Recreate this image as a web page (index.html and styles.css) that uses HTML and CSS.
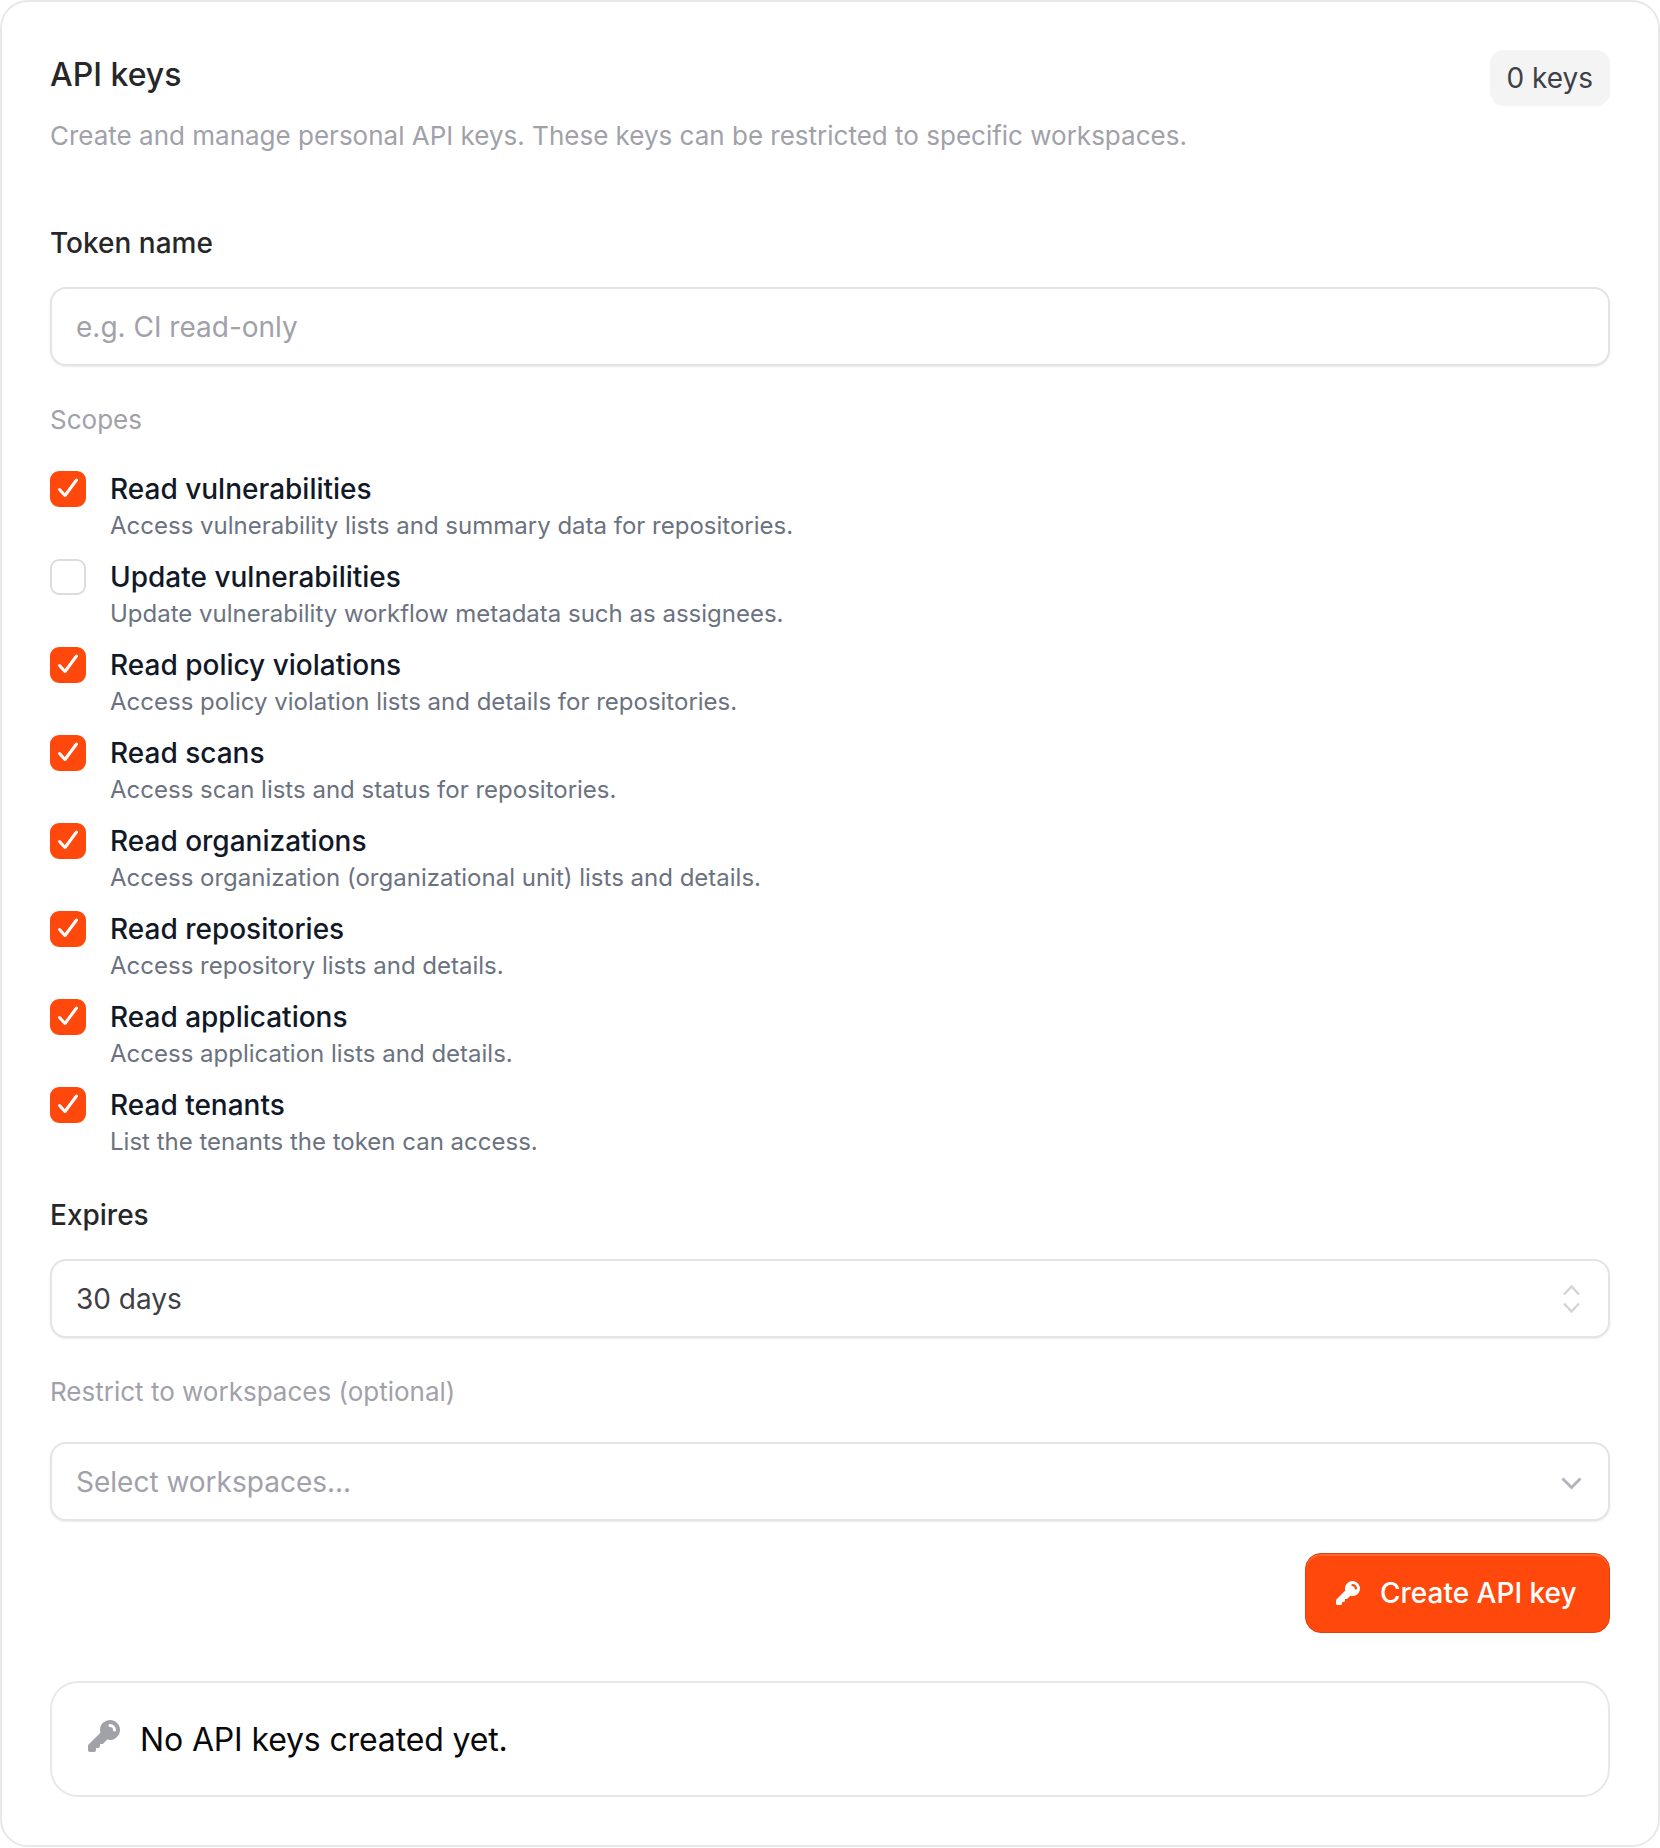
FILE: index.html
```html
<!DOCTYPE html>
<html lang="en">
<head>
    <meta charset="UTF-8">
    <title>API keys</title>
    <link rel="stylesheet" href="styles.css">
</head>
<body>
    <section class="card">
        <div class="card-head">
            <div>
                <h2 class="card-title">API keys</h2>
                <p class="card-sub">Create and manage personal API keys. These keys can be restricted to specific workspaces.</p>
            </div>
            <span class="badge">0 keys</span>
        </div>

        <form class="key-form">
            <label class="field-label" for="token_name">Token name</label>
            <input class="text-input" type="text" id="token_name" placeholder="e.g. CI read-only">

            <div class="muted-label scopes-label">Scopes</div>
            <div class="scopes">
                <div class="scope">
                    <span class="check on"><svg viewBox="0 0 32 32"><path d="M7.5 16.5l5.5 6L24.5 7"/></svg></span>
                    <div>
                        <div class="scope-name">Read vulnerabilities</div>
                        <div class="scope-desc">Access vulnerability lists and summary data for repositories.</div>
                    </div>
                </div>
                <div class="scope">
                    <span class="check"></span>
                    <div>
                        <div class="scope-name">Update vulnerabilities</div>
                        <div class="scope-desc">Update vulnerability workflow metadata such as assignees.</div>
                    </div>
                </div>
                <div class="scope">
                    <span class="check on"><svg viewBox="0 0 32 32"><path d="M7.5 16.5l5.5 6L24.5 7"/></svg></span>
                    <div>
                        <div class="scope-name">Read policy violations</div>
                        <div class="scope-desc">Access policy violation lists and details for repositories.</div>
                    </div>
                </div>
                <div class="scope">
                    <span class="check on"><svg viewBox="0 0 32 32"><path d="M7.5 16.5l5.5 6L24.5 7"/></svg></span>
                    <div>
                        <div class="scope-name">Read scans</div>
                        <div class="scope-desc">Access scan lists and status for repositories.</div>
                    </div>
                </div>
                <div class="scope">
                    <span class="check on"><svg viewBox="0 0 32 32"><path d="M7.5 16.5l5.5 6L24.5 7"/></svg></span>
                    <div>
                        <div class="scope-name">Read organizations</div>
                        <div class="scope-desc">Access organization (organizational unit) lists and details.</div>
                    </div>
                </div>
                <div class="scope">
                    <span class="check on"><svg viewBox="0 0 32 32"><path d="M7.5 16.5l5.5 6L24.5 7"/></svg></span>
                    <div>
                        <div class="scope-name">Read repositories</div>
                        <div class="scope-desc">Access repository lists and details.</div>
                    </div>
                </div>
                <div class="scope">
                    <span class="check on"><svg viewBox="0 0 32 32"><path d="M7.5 16.5l5.5 6L24.5 7"/></svg></span>
                    <div>
                        <div class="scope-name">Read applications</div>
                        <div class="scope-desc">Access application lists and details.</div>
                    </div>
                </div>
                <div class="scope">
                    <span class="check on"><svg viewBox="0 0 32 32"><path d="M7.5 16.5l5.5 6L24.5 7"/></svg></span>
                    <div>
                        <div class="scope-name">Read tenants</div>
                        <div class="scope-desc">List the tenants the token can access.</div>
                    </div>
                </div>
            </div>

            <div class="field-label expires-label">Expires</div>
            <div class="select-box">
                <span>30 days</span>
                <svg class="updown" viewBox="0 0 17 28"><path d="M1 9.5l7.5-8 7.5 8M1 18.5l7.5 8 7.5-8"/></svg>
            </div>

            <div class="muted-label restrict-label">Restrict to workspaces (optional)</div>
            <div class="select-box placeholder">
                <span>Select workspaces...</span>
                <svg class="chevron" viewBox="0 0 21 13"><path d="M1.5 1.5l9 9 9-9"/></svg>
            </div>

            <div class="form-actions">
                <button type="button" class="btn-primary">
                    <svg class="key-icon" viewBox="0 0 20 20"><path fill-rule="evenodd" clip-rule="evenodd" d="M8 7a5 5 0 1 1 3.61 4.804l-1.903 1.903A1 1 0 0 1 9 14H8v1a1 1 0 0 1-1 1H6v1a1 1 0 0 1-1 1H3a1 1 0 0 1-1-1v-2a1 1 0 0 1 .293-.707L8.196 8.39A5.002 5.002 0 0 1 8 7Zm5-3a.75.75 0 0 0 0 1.5A1.5 1.5 0 0 1 14.5 7 .75.75 0 0 0 16 7a3 3 0 0 0-3-3Z"/></svg>
                    Create API key
                </button>
            </div>
        </form>

        <div class="empty-box">
            <svg class="empty-icon" viewBox="0 0 20 20"><path fill-rule="evenodd" clip-rule="evenodd" d="M8 7a5 5 0 1 1 3.61 4.804l-1.903 1.903A1 1 0 0 1 9 14H8v1a1 1 0 0 1-1 1H6v1a1 1 0 0 1-1 1H3a1 1 0 0 1-1-1v-2a1 1 0 0 1 .293-.707L8.196 8.39A5.002 5.002 0 0 1 8 7Zm5-3a.75.75 0 0 0 0 1.5A1.5 1.5 0 0 1 14.5 7 .75.75 0 0 0 16 7a3 3 0 0 0-3-3Z"/></svg>
            <span>No API keys created yet.</span>
        </div>
    </section>
</body>
</html>
```

FILE: styles.css
```css
* {
    box-sizing: border-box;
}
body {
    margin: 0;
    background: #fff;
    font-family: Inter, "Liberation Sans", sans-serif;
    color: #111827;
}
.card {
    height: 1847px;
    padding: 48px 48px 0;
    border: 2px solid #e8e8ea;
    border-radius: 28px;
    background: #fff;
}
.card-head {
    display: flex;
    justify-content: space-between;
    align-items: flex-start;
}
.card-title {
    margin: 9px 0 0;
    font-size: 32px;
    font-weight: 500;
    line-height: 32px;
    color: #27272a;
}
.card-sub {
    margin: 27px 0 0;
    font-size: 26px;
    line-height: 36px;
    color: #a1a1aa;
}
.badge {
    padding: 10px 17px 10px 16px;
    border-radius: 14px;
    background: #f4f4f5;
    font-size: 28px;
    line-height: 36px;
    color: #3f3f46;
}
.key-form {
    display: flex;
    flex-direction: column;
}
.field-label {
    margin-top: 72px;
    font-size: 28px;
    font-weight: 500;
    line-height: 34px;
    color: #27272a;
}
.text-input,
.select-box {
    width: 100%;
    height: 79px;
    margin-top: 27px;
    padding: 0 25px 0 24px;
    border: 2px solid #e4e4e7;
    border-radius: 16px;
    background: #fff;
    font-family: inherit;
    font-size: 28px;
    color: #3f3f46;
    box-shadow: 0 1px 2px rgba(0, 0, 0, 0.08);
}
.text-input::placeholder {
    color: #a1a1aa;
}
.select-box {
    display: flex;
    align-items: center;
    justify-content: space-between;
}
.select-box.placeholder {
    color: #a1a1aa;
}
.muted-label {
    font-size: 26px;
    line-height: 34px;
    color: #a1a1aa;
}
.scopes-label {
    margin-top: 37px;
}
.scopes {
    display: flex;
    flex-direction: column;
    margin-top: 34px;
}
.scope {
    display: flex;
    gap: 24px;
    height: 88px;
}
.check {
    flex: none;
    display: flex;
    align-items: center;
    justify-content: center;
    width: 36px;
    height: 36px;
    border: 2px solid #dcdcdf;
    border-radius: 9px;
    background: #fff;
}
.check.on {
    border-color: #ff480c;
    background: #ff480c;
}
.check svg {
    width: 32px;
    height: 32px;
    fill: none;
    stroke: #fff;
    stroke-width: 3;
    stroke-linecap: round;
    stroke-linejoin: round;
}
.scope-name {
    font-size: 28px;
    font-weight: 500;
    line-height: 36px;
    color: #111827;
}
.scope-desc {
    margin-top: 1px;
    font-size: 24px;
    line-height: 36px;
    color: #6b7280;
}
.expires-label {
    margin-top: 23px;
}
.restrict-label {
    margin-top: 37px;
}
.restrict-label + .select-box {
    margin-top: 33px;
}
.updown {
    width: 17px;
    height: 28px;
    margin-right: 3px;
    fill: none;
    stroke: #d4d4d8;
    stroke-width: 2.4;
}
.chevron {
    width: 21px;
    height: 13px;
    margin: 3px 1px 0 0;
    fill: none;
    stroke: #b4b4bd;
    stroke-width: 3;
}
.form-actions {
    display: flex;
    justify-content: flex-end;
    margin-top: 32px;
}
.btn-primary {
    display: flex;
    align-items: center;
    gap: 17px;
    width: 305px;
    height: 80px;
    padding: 0 27px;
    border: 1px solid #e0410b;
    border-radius: 16px;
    background: #ff480c;
    box-shadow: inset 0 2px 0 rgba(255, 255, 255, 0.16);
    font-family: inherit;
    font-size: 28px;
    font-weight: 500;
    color: #fff;
}
.key-icon {
    width: 30px;
    height: 30px;
    fill: #fff;
}
.empty-box {
    display: flex;
    align-items: center;
    gap: 16px;
    height: 116px;
    margin-top: 48px;
    padding: 0 32px;
    border: 2px solid #e8e8ea;
    border-radius: 28px;
    font-size: 32px;
    letter-spacing: -0.14px;
    color: #09090b;
}
.empty-icon {
    width: 40px;
    height: 40px;
    margin-bottom: 6px;
    fill: #a1a1aa;
}
```
